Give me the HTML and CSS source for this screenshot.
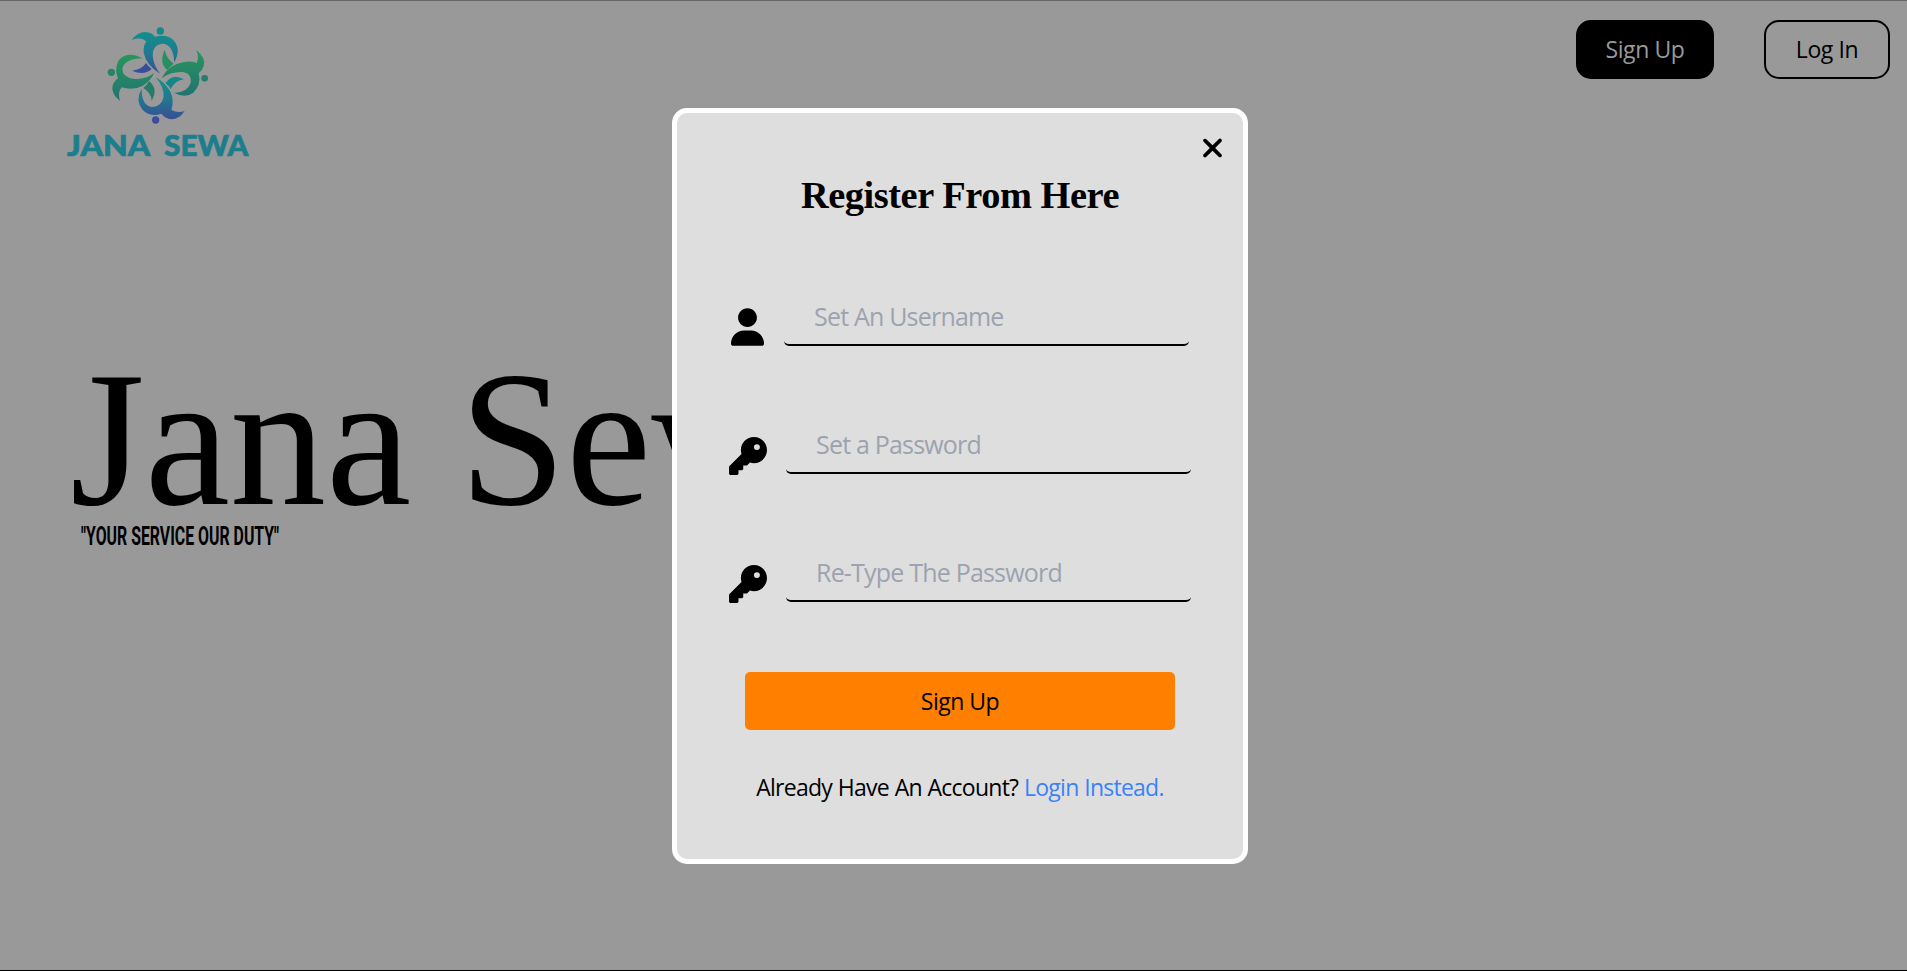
FILE: index.html
```html
<!DOCTYPE html>
<html lang="en">
<head>
<meta charset="utf-8">
<title>Jana Sewa</title>
<link rel="stylesheet" href="styles.css">
</head>
<body>
<div class="page">
  <header class="header">
    <svg class="logo" viewBox="0 0 660 480" role="img" aria-label="Jana Sewa">
      <defs>
        <linearGradient id="top" x1="0" y1="0" x2="0" y2="1"><stop offset="0" stop-color="#128f8c"/><stop offset=".5" stop-color="#1f7a90"/><stop offset="1" stop-color="#3a4c96"/></linearGradient>
        <linearGradient id="side" x1="0" y1="0" x2="0" y2="1"><stop offset="0" stop-color="#25965c"/><stop offset="1" stop-color="#237372"/></linearGradient>
      </defs>
      <g fill="url(#top)">
        <circle cx="331" cy="63" r="11" fill="#128a88"/>
        <path d="M245 90Q262 66 286 66Q306 67 315 80Q352 70 372 92Q394 118 373 157Q370 102 336 101Q304 106 309 144Q313 170 330 191Q289 165 281 128Q279 106 289 95Q274 79 245 90Z"/>
        <path fill="#3a4d9b" d="M246 182Q276 179 288 159Q295 170 305 177Q282 198 246 182Z"/>
        <circle cx="317" cy="330" r="11" fill="#3a4c9c"/>
        <path d="M317 202Q344 217 360 243Q374 271 364 299Q382 311 404 303Q388 328 364 328Q345 325 334 311Q300 322 278 300Q254 270 275 236Q274 286 306 291Q335 290 341 260Q342 230 317 202Z"/>
        <path fill="#138888" d="M402 208Q367 188 346 220Q356 226 362 237Q375 211 402 208Z"/>
      </g>
      <g fill="url(#side)">
        <circle cx="464" cy="205" r="10" fill="#237e70"/>
        <path d="M439 120Q469 145 461 168Q457 182 446 190Q455 225 430 248Q405 266 372 248Q411 249 422 219Q426 188 394 186Q360 186 335 205Q357 160 408 155Q428 154 440 159Q448 142 439 120Z"/>
        <path fill="#278f60" d="M344 120Q349 146 371 161Q360 170 352 180Q326 160 344 120Z"/>
        <circle cx="184" cy="187" r="11" fill="#268464"/>
        <path d="M278 145Q226 120 204 155Q193 180 204 205Q186 217 187 238Q191 260 210 272Q202 247 215 232Q247 243 279 227Q303 210 313 189Q284 210 250 206Q217 201 217 176Q224 146 278 145Z"/>
        <path fill="#247d69" d="M297 213Q326 237 305 272Q303 247 280 234Q290 227 297 213Z"/>
      </g>
      <text class="logo-name" x="51" y="437" textLength="250" lengthAdjust="spacingAndGlyphs">JANA</text>
      <text class="logo-name" x="342" y="437" textLength="253" lengthAdjust="spacingAndGlyphs">SEWA</text>
    </svg>
    <nav class="nav">
      <button class="nav-btn nav-btn-solid"><span class="label">Sign Up</span></button>
      <button class="nav-btn nav-btn-outline"><span class="label">Log In</span></button>
    </nav>
  </header>
  <main class="hero">
    <h1 class="hero-title">Jana Sewa</h1>
    <p class="tagline">"YOUR SERVICE OUR DUTY"</p>
  </main>
</div>
<div class="overlay">
  <form class="modal">
    <svg class="close" viewBox="0 0 320 512"><path d="M310.6 150.6c12.5-12.5 12.5-32.8 0-45.3s-32.8-12.5-45.3 0L160 210.7 54.6 105.4c-12.5-12.5-32.8-12.5-45.3 0s-12.5 32.8 0 45.3L114.7 256 9.4 361.4c-12.5 12.5-12.5 32.8 0 45.3s32.8 12.5 45.3 0L160 301.3 265.4 406.6c12.5 12.5 32.8 12.5 45.3 0s12.5-32.8 0-45.3L205.3 256 310.6 150.6z"/></svg>
    <h2 class="title">Register From Here</h2>
    <div class="fields">
      <label class="field">
        <svg class="icon icon-user" viewBox="0 0 448 512"><path d="M224 256c70.7 0 128-57.3 128-128S294.7 0 224 0S96 57.3 96 128s57.3 128 128 128zm-45.7 48C79.8 304 0 383.8 0 482.3C0 498.7 13.3 512 29.7 512H418.3c16.4 0 29.7-13.3 29.7-29.7C448 383.8 368.2 304 269.7 304H178.3z"/></svg>
        <input class="input" type="text" placeholder="Set An Username">
      </label>
      <label class="field">
        <svg class="icon" viewBox="0 0 512 512"><path d="M336 352c97.2 0 176-78.8 176-176S433.2 0 336 0S160 78.8 160 176c0 18.7 2.9 36.8 8.3 53.7L7 391c-4.5 4.5-7 10.6-7 17v80c0 13.3 10.7 24 24 24h80c13.3 0 24-10.7 24-24V448h40c13.3 0 24-10.7 24-24V384h40c6.4 0 12.5-2.5 17-7l33.3-33.3c16.9 5.4 35 8.3 53.7 8.3zM376 96a40 40 0 1 1 0 80 40 40 0 1 1 0-80z"/></svg>
        <input class="input" type="password" placeholder="Set a Password">
      </label>
      <label class="field">
        <svg class="icon" viewBox="0 0 512 512"><path d="M336 352c97.2 0 176-78.8 176-176S433.2 0 336 0S160 78.8 160 176c0 18.7 2.9 36.8 8.3 53.7L7 391c-4.5 4.5-7 10.6-7 17v80c0 13.3 10.7 24 24 24h80c13.3 0 24-10.7 24-24V448h40c13.3 0 24-10.7 24-24V384h40c6.4 0 12.5-2.5 17-7l33.3-33.3c16.9 5.4 35 8.3 53.7 8.3zM376 96a40 40 0 1 1 0 80 40 40 0 1 1 0-80z"/></svg>
        <input class="input" type="password" placeholder="Re-Type The Password">
      </label>
    </div>
    <button class="submit" type="button"><span class="label">Sign Up</span></button>
    <p class="switch">Already Have An Account? <a class="link">Login Instead.</a></p>
  </form>
</div>
</body>
</html>
```
FILE: styles.css
```css
* { box-sizing: border-box; margin: 0; padding: 0; }
body {
  height: 971px;
  overflow: hidden;
  background: #999;
  color: #000;
  font-family: "Open Sans", "Noto Sans", sans-serif;
  font-size: 24px;
}
.page {
  height: 971px;
  border-top: 1px solid #666;
  border-bottom: 1px solid #000;
}
.header {
  display: flex;
  justify-content: space-between;
  align-items: flex-start;
  height: 343px;
  padding: 9px 17px 0 50px;
}
.logo { width: 220px; height: 160px; }
.logo-name { font-family: Lato, sans-serif; font-weight: 900; font-size: 87px; fill: #1c7e8d; stroke: #1c7e8d; stroke-width: 2px; }
.nav { display: flex; gap: 50px; padding-top: 10px; }
.nav-btn {
  height: 59px;
  border: 2px solid #000;
  border-radius: 15px;
  font: 23px/1 "Open Sans", "Noto Sans", sans-serif;
  white-space: nowrap;
  letter-spacing: -0.4px;
}
.nav-btn-solid { width: 138px; background: #000; color: #999; }
.nav-btn-outline { width: 126px; background: transparent; color: #000; }
.hero { padding-left: 70px; }
.hero-title {
  font: 400 192px/192px "Liberation Serif", "Times New Roman", serif;
  white-space: nowrap;
}
.tagline {
  width: max-content;
  margin: -13px 0 0 11px;
  font: 700 25.5px/26px Roboto, sans-serif;
  white-space: nowrap;
  transform: scaleX(.622);
  transform-origin: left;
}
.overlay {
  position: absolute;
  inset: 0;
  padding-top: 108px;
  padding-left: 672px;
}
.modal {
  position: relative;
  width: 576px;
  height: 756px;
  border: 5px solid #fff;
  border-radius: 15px;
  background: #dedede;
  display: flex;
  flex-direction: column;
  align-items: center;
}
.close { position: absolute; top: 20px; right: 21px; width: 19px; height: 30px; }
.title {
  margin-top: 59px;
  font: 700 38.4px/46px "Liberation Serif", "Times New Roman", serif;
  letter-spacing: -0.45px;
  white-space: nowrap;
}
.fields { display: flex; flex-direction: column; gap: 74px; margin-top: 74px; width: 462px; }
.field { display: flex; align-items: flex-end; height: 54px; gap: 19px; }
.icon { flex: none; width: 38px; height: 38px; margin-bottom: -1px; }
.icon-user { width: 33px; margin: 0 1px 0 2px; }
.input {
  width: 405px;
  height: 54px;
  padding: 0 30px 5px;
  border: 0 solid #000;
  border-bottom-width: 2px;
  border-radius: 5px;
  background: transparent;
  font: 25px/34px "Open Sans", "Noto Sans", sans-serif;
  letter-spacing: -0.8px;
}
.input::placeholder { color: #9ca3af; opacity: 1; }
.submit {
  width: 430px;
  height: 58px;
  margin-top: 70px;
  border: 0;
  border-radius: 5px;
  background: #ff8000;
  color: #000;
  font: 23px/1 "Open Sans", "Noto Sans", sans-serif;
  letter-spacing: -0.5px;
}
.switch {
  margin-top: 40px;
  font-size: 23px;
  line-height: 34px;
  letter-spacing: -0.75px;
  word-spacing: 0.5px;
  white-space: nowrap;
}
.link { color: #3b82f6; }
```
